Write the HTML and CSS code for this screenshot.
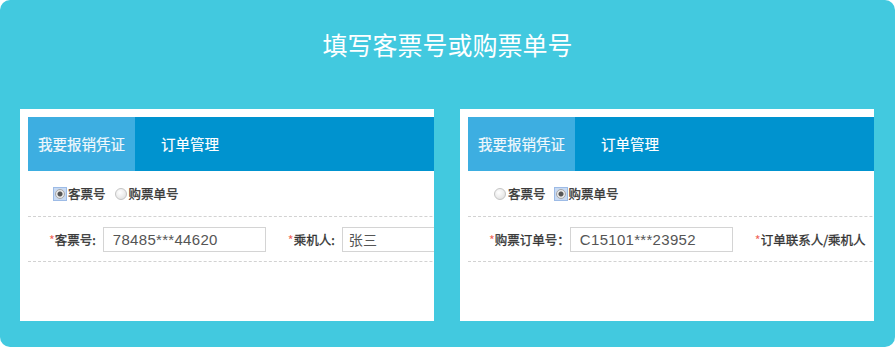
FILE: index.html
```html
<!DOCTYPE html>
<html lang="zh-CN">
<head>
  <meta charset="utf-8">
  <title>填写客票号或购票单号</title>
  <link rel="stylesheet" href="styles.css">
</head>
<body>
  <div class="panel">
    <h1 class="title">填写客票号或购票单号</h1>
    <div class="cards">
      <div class="card">
        <div class="sheet">
          <div class="tabs">
            <span class="tab tab--on">我要报销凭证</span>
            <span class="tab">订单管理</span>
          </div>
          <div class="choose">
            <span class="radio radio--on"><span class="dot"></span></span><span class="opt">客票号</span>
            <span class="radio"><span class="dot"></span></span><span class="opt">购票单号</span>
          </div>
          <div class="fields">
            <label class="lbl"><em>*</em>客票号:</label>
            <span class="input">78485***44620</span>
            <label class="lbl lbl--far"><em>*</em>乘机人:</label>
            <span class="input input--cn">张三</span>
          </div>
        </div>
      </div>
      <div class="card">
        <div class="sheet">
          <div class="tabs">
            <span class="tab tab--on">我要报销凭证</span>
            <span class="tab">订单管理</span>
          </div>
          <div class="choose">
            <span class="radio"><span class="dot"></span></span><span class="opt">客票号</span>
            <span class="radio radio--on"><span class="dot"></span></span><span class="opt">购票单号</span>
          </div>
          <div class="fields">
            <label class="lbl lbl--wide"><em>*</em>购票订单号：</label>
            <span class="input">C15101***23952</span>
            <label class="lbl lbl--far"><em>*</em>订单联系人/乘机人</label>
          </div>
        </div>
      </div>
    </div>
  </div>
</body>
</html>
```

FILE: styles.css
```css
*, *::before, *::after {
  box-sizing: border-box;
}
body {
  margin: 0;
  background: #fff;
  font-family: "Noto Sans CJK SC", "Liberation Sans", sans-serif;
}
.panel {
  width: 895px;
  height: 347px;
  background: #42c9df;
  border-radius: 10px;
  overflow: hidden;
}
.title {
  margin: 0;
  padding-top: 28px;
  height: 60px;
  line-height: 32px;
  font-size: 25px;
  font-weight: normal;
  color: #fff;
  text-align: center;
}
.cards {
  display: flex;
  gap: 26px;
  margin-top: 49px;
  padding-left: 20px;
}
.card {
  width: 414px;
  height: 212px;
  padding: 8px 0 0 8px;
  background: #fff;
  overflow: hidden;
}
.sheet {
  width: 560px;
}

/* tabs */
.tabs {
  display: flex;
  height: 54px;
  background: #0093cf;
}
.tab {
  line-height: 54px;
  font-size: 14.5px;
  color: #fff;
  margin-left: 26px;
  -webkit-text-stroke: 0.2px #fff;
}
.tab--on {
  width: 107px;
  margin-left: 0;
  padding-left: 10px;
  background: #3daee1;
  color: #eef7fc;
}

/* radio row */
.choose {
  display: flex;
  align-items: center;
  height: 46px;
  padding-left: 25px;
  border-bottom: 1px dashed #d2d2d2;
  font-size: 12.5px;
  color: #333;
  -webkit-text-stroke: 0.3px #333;
}
.radio {
  display: flex;
  justify-content: center;
  align-items: center;
  width: 14px;
  height: 14px;
  margin-right: 1px;
}
.radio .dot {
  width: 12px;
  height: 12px;
  border-radius: 50%;
  border: 1px solid #c4c4c4;
  background: radial-gradient(circle at 40% 35%, #fff, #dcdcdc);
}
.radio--on {
  background: #c8daf3;
  border: 1px solid #9dbbe6;
}
.radio--on .dot {
  width: 10px;
  height: 10px;
  border-color: #a8a8a8;
  background: radial-gradient(circle, #555 0 2px, #e9e9e9 3px);
}
.opt {
  margin-right: 8px;
}

/* field row */
.fields {
  display: flex;
  align-items: center;
  height: 45px;
  padding-left: 21px;
  border-bottom: 1px dashed #d2d2d2;
  font-size: 12.5px;
  color: #333;
}
.lbl {
  margin-right: 7px;
  white-space: nowrap;
  -webkit-text-stroke: 0.3px #333;
}
.lbl--wide {
  margin-right: 0;
}
.lbl em {
  font-style: normal;
  color: #f0645a;
  -webkit-text-stroke: 0;
}
.lbl--far {
  margin-left: 22px;
}
.input {
  flex: none;
  width: 163px;
  height: 25px;
  line-height: 23px;
  padding-left: 9px;
  border: 1px solid #d4d4d4;
  font-family: "Liberation Sans", sans-serif;
  font-size: 15px;
  letter-spacing: 0.3px;
  color: #555;
}
.input--cn {
  padding-left: 6px;
  font-family: "Noto Sans CJK SC", sans-serif;
  font-size: 14px;
}
```
